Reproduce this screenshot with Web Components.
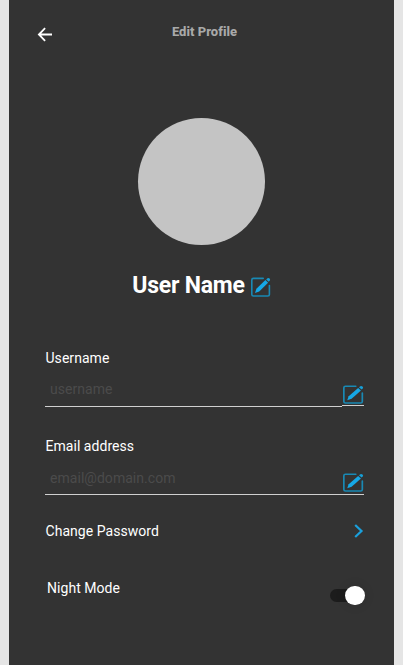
<!DOCTYPE html>
<html lang="en">
<head>
<meta charset="utf-8">
<title>Edit Profile</title>
<style>
html,body{margin:0;height:100%;overflow:hidden}
body{background:#e5e5e5;font-family:Roboto,"Liberation Sans",sans-serif;color:#fff}
</style>
</head>
<body>
<profile-screen>
  <screen-header>Edit Profile</screen-header>
  <profile-hero>User Name</profile-hero>
  <profile-field placeholder="username" style="--edit-rule:30px">Username</profile-field>
  <profile-field placeholder="email@domain.com" style="--edit-rule:31px;--hint-top:8px">Email address</profile-field>
  <link-row>Change Password</link-row>
  <toggle-row>Night Mode</toggle-row>
</profile-screen>
<script>
const define = (name, html) => {
  const template = document.createElement('template');
  template.innerHTML = html;
  customElements.define(name, class extends HTMLElement {
    constructor() {
      super();
      this.attachShadow({mode: 'open'}).append(template.content.cloneNode(true));
    }
    connectedCallback() {
      const hint = this.shadowRoot.querySelector('.hint');
      if (hint) hint.textContent = this.getAttribute('placeholder');
    }
  });
};

define('edit-icon', `
<style>:host{display:block;width:20px;height:20px;flex:none}svg{display:block;width:100%;height:100%;overflow:visible}</style>
<svg viewBox="0 0 20 20" preserveAspectRatio="none" fill="none">
  <path d="M12.2 1.4H2.4Q.8 1.4 .8 3V17.4Q.8 19 2.4 19H16.8Q18.4 19 18.4 17.4V8.5" stroke="#1989b4" stroke-width="1.6" stroke-linecap="round"/>
  <path d="M4 16.1L5.4 11.8L14.4 3.1L17.1 5.7L8.2 14.5Z" fill="#16a8e6"/>
  <path d="M15.2 2.4L16.5 1.3Q17.5.5 18.6 1.5Q19.6 2.6 18.8 3.6L17.7 4.8Z" fill="#16a0d8"/>
</svg>`);

define('profile-screen', `
<style>:host{display:flex;flex-direction:column;box-sizing:border-box;width:385px;height:665px;margin-left:9px;padding:0 30px 0 36px;background:#333}</style>
<slot></slot>`);

define('screen-header', `
<style>
:host{display:grid;grid-template-columns:1fr auto 1fr;height:68px;margin:0 -8px 0 -8px;align-items:start}
svg{display:block;margin-top:27px;width:16px;height:15px}
.title{margin-top:23px;font-size:13px;line-height:17px;font-weight:800;letter-spacing:.03px;color:#a9a9a9;white-space:nowrap}
</style>
<svg viewBox="0 0 16 15" fill="none" stroke="#fff" stroke-width="1.8"><path d="M15 7.5H2.2M8.1 1.2L1.9 7.5L8.1 13.8"/></svg>
<div class="title"><slot></slot></div>`);

define('profile-hero', `
<style>
:host{display:flex;flex-direction:column;align-items:center;height:278px;padding-top:50px;box-sizing:border-box;margin-right:6px}
.avatar{width:127px;height:127px;border-radius:50%;background:#c4c4c4;flex:none}
.name{display:flex;align-items:flex-start;margin-top:27px;gap:6px;font-size:23px;line-height:28px;font-weight:700;letter-spacing:-.2px;white-space:nowrap}
edit-icon{margin-top:5px}
</style>
<div class="avatar"></div>
<div class="name"><slot></slot><edit-icon></edit-icon></div>`);

define('profile-field', `
<style>
:host{display:block;height:88px;flex:none}
.label{font-size:14px;line-height:24px;height:24px;padding-left:.5px;letter-spacing:.04px}
.input{display:flex;width:319px;align-items:flex-start}
.hint{box-sizing:border-box;flex:1;height:37px;padding:var(--hint-top,7px) 5px 0;border-bottom:1px solid #d0d0d0;font-size:14px;line-height:24px;color:#4b4b4b;letter-spacing:.04px}
.edit{box-sizing:border-box;width:22px;height:calc(var(--edit-rule) + 6px);border-bottom:1px solid #d0d0d0;padding:15px 0 0 .5px}
edit-icon{width:21px;height:19px}
</style>
<div class="label"><slot></slot></div>
<div class="input"><div class="hint"></div><div class="edit"><edit-icon></edit-icon></div></div>`);

define('link-row', `
<style>
:host{display:flex;justify-content:space-between;width:318.5px;height:54px;flex:none;padding-left:.5px;box-sizing:border-box;font-size:14px;line-height:18px;letter-spacing:.04px}
svg{width:10px;height:14px;margin-top:2px}
</style>
<slot></slot><svg viewBox="0 0 10 14" fill="none" stroke="#1aa0dc" stroke-width="2.2"><path d="M1.2 1L7.5 7L1.2 13"/></svg>`);

define('toggle-row', `
<style>
:host{display:flex;justify-content:space-between;width:318px;padding-left:2px;box-sizing:border-box;font-size:14px;line-height:24px;letter-spacing:.05px}
.track{display:flex;align-items:center;justify-content:flex-end;width:32px;height:13px;margin:13px 1px 0 0;border-radius:7px;background:#1c1c1c}
.knob{width:19.5px;height:19.5px;flex:none;margin-right:-2.6px;border-radius:50%;background:#fff;box-shadow:0 0 7px 4px rgba(0,0,0,.05)}
</style>
<slot></slot><div class="track"><div class="knob"></div></div>`);
</script>
</body>
</html>
